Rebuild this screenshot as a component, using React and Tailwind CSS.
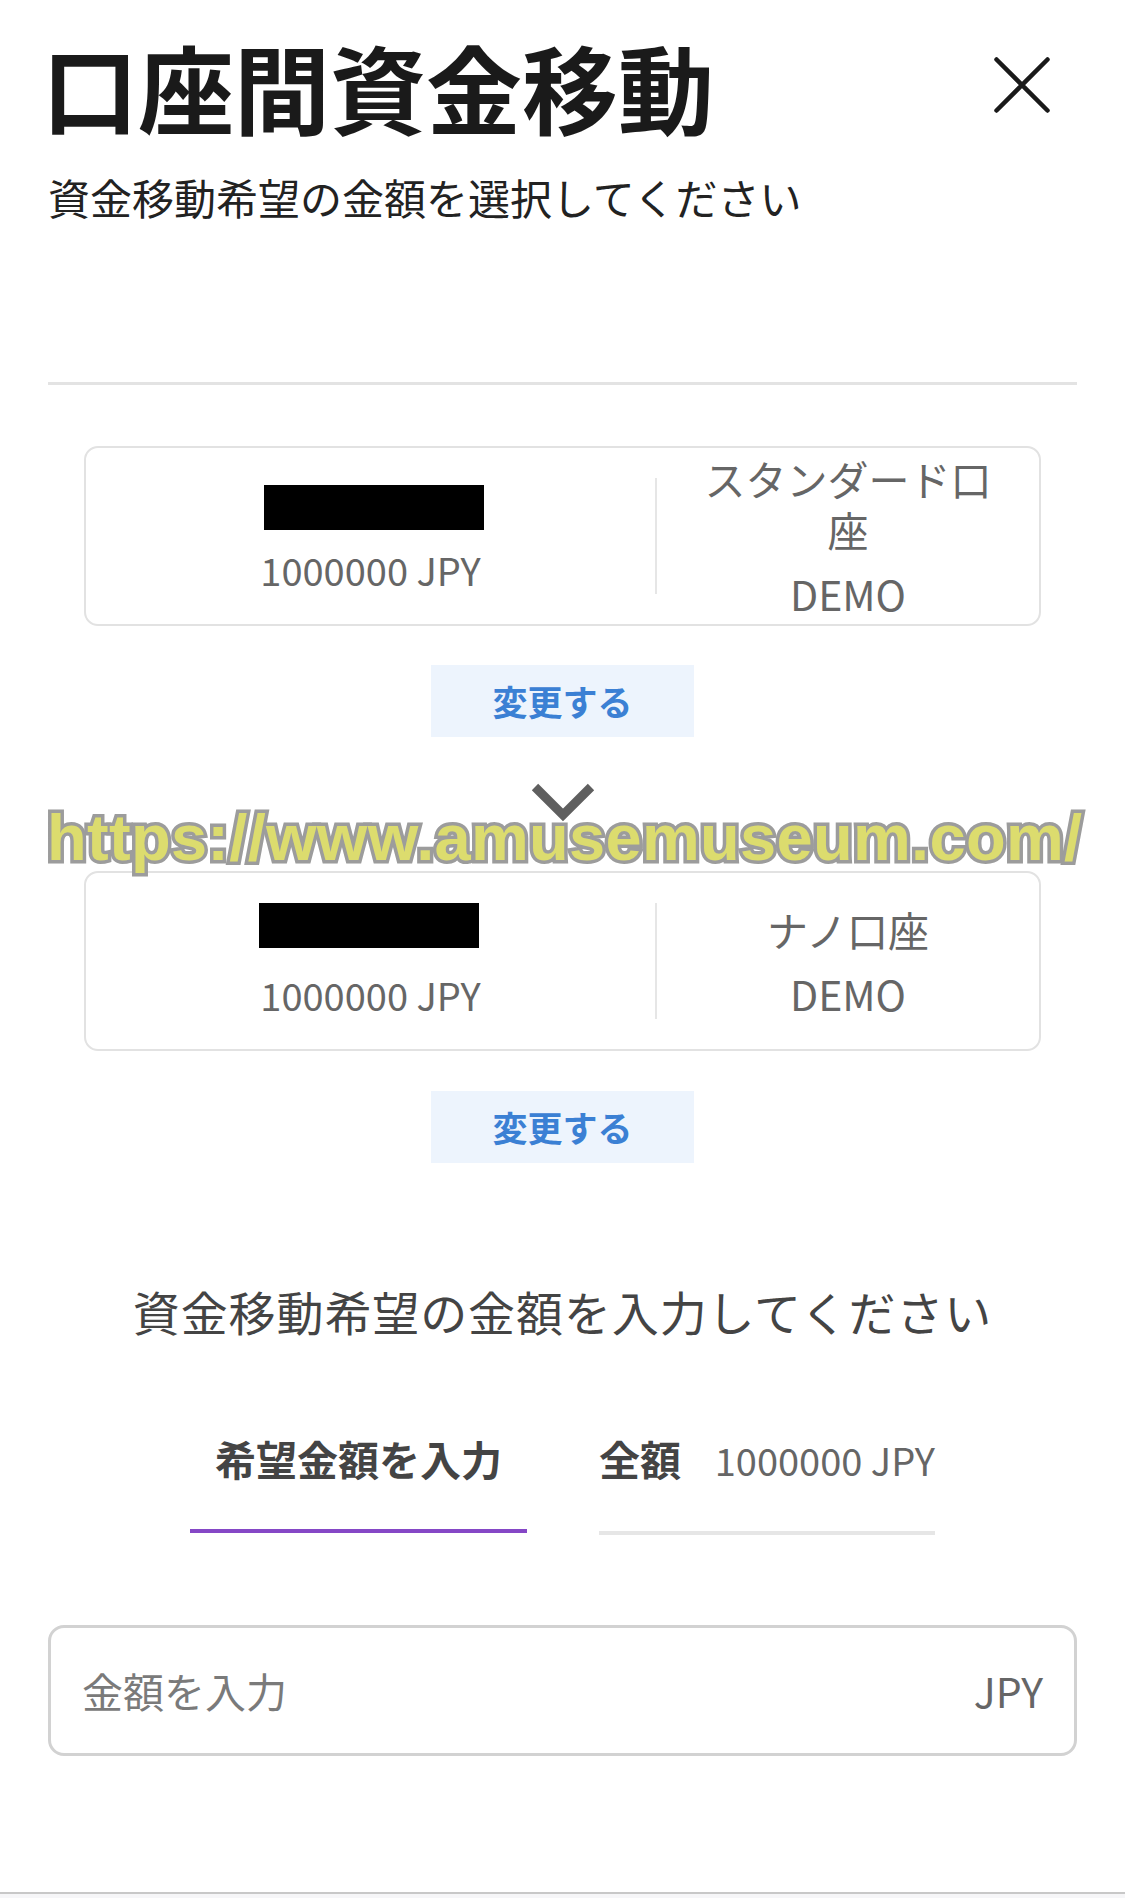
import React from 'react';

const accounts = [
  {
    id: 'from',
    name: 'スタンダード口座',
    kind: 'DEMO',
    balance: '1000000 JPY',
    maskClass: 'translate-x-[3px] translate-y-[7px]',
  },
  {
    id: 'to',
    name: 'ナノ口座',
    kind: 'DEMO',
    balance: '1000000 JPY',
    maskClass: '-translate-x-[2px]',
  },
];

const AccountCard = ({ account }) => (
  <div className="h-[180px] border-2 border-[#e2e2e2] rounded-[14px] flex items-stretch py-[30px]">
    {/* Account number (masked) + balance */}
    <div className="w-[569px] flex flex-col items-center justify-center">
      <div className={`w-[220px] h-[57px] bg-black ${account.maskClass}`} />
      <div className="mt-[22px] text-[38px] leading-[49px] text-[#666]">{account.balance}</div>
    </div>
    <div className="w-[2px] bg-[#e6e6e6]" />
    {/* Account type */}
    <div className="flex-1 flex flex-col items-center justify-center px-[38px] text-center text-[#666]">
      <div className="text-[41px] leading-[51px]">{account.name}</div>
      <div className="mt-[13px] text-[41px] leading-[51px]">{account.kind}</div>
    </div>
  </div>
);

const ChangeButton = ({ className = '' }) => (
  <button
    className={`mx-auto w-[263px] h-[72px] bg-[#edf4fd] text-[#3b80d4] text-[35px] font-bold flex items-center justify-center ${className}`}
  >
    変更する
  </button>
);

export default function App() {
  return (
    <div className="relative w-[1125px] h-[1898px] bg-white overflow-hidden flex flex-col font-['Noto_Sans_CJK_JP','Noto_Sans',sans-serif]">
      <div className="px-[48px]">
        {/* Header */}
        <div className="flex items-start justify-between pt-[38px]">
          <h1 className="-ml-[6px] text-[96px] leading-[96px] font-bold text-[#1a1a1a]">口座間資金移動</h1>
          <button className="mt-[19px] mr-[27px] w-[56px] h-[56px]">
            <svg viewBox="0 0 56 56" className="w-[56px] h-[56px]" fill="none" stroke="#1a1a1a" strokeWidth="4.5" strokeLinecap="round">
              <path d="M2.5 2.5 L53.5 53.5 M53.5 2.5 L2.5 53.5" />
            </svg>
          </button>
        </div>
        <p className="mt-[38px] text-[42px] leading-[49px] text-[#222]">資金移動希望の金額を選択してください</p>

        <div className="mt-[161px] h-[3px] bg-[#e3e3e3]" />

        {/* Accounts */}
        <div className="mx-[36px] mt-[61px] flex flex-col">
          <AccountCard account={accounts[0]} />
          <ChangeButton className="mt-[39px]" />
          <div className="mt-[45px] flex justify-center">
            <svg viewBox="0 0 66 42" className="w-[66px] h-[42px]" fill="none" stroke="#5f5f5f" strokeWidth="9" strokeLinecap="butt" strokeLinejoin="miter">
              <polyline points="5,5 33,33 61,5" />
            </svg>
          </div>
          <div className="mt-[47px]">
            <AccountCard account={accounts[1]} />
          </div>
          <ChangeButton className="mt-[40px]" />
        </div>

        {/* Amount */}
        <p className="mt-[120px] text-center text-[47px] leading-[56px] tracking-[0.9px] text-[#444]">資金移動希望の金額を入力してください</p>

        <div className="mt-[94px] flex justify-center gap-[72px]">
          <div className="w-[337px] flex flex-col items-center">
            <div className="text-[41px] leading-[50px] font-bold text-[#444]">希望金額を入力</div>
            <div className="mt-[46px] h-[4px] w-full bg-[#8547c6]" />
          </div>
          <div className="w-[336px] flex flex-col">
            <div className="flex items-baseline justify-between">
              <span className="text-[41px] leading-[50px] font-bold text-[#444]">全額</span>
              <span className="text-[38px] leading-[50px] text-[#666]">1000000 JPY</span>
            </div>
            <div className="mt-[46px] h-[4px] w-full bg-[#e6e6e6]" />
          </div>
        </div>

        <div className="mt-[90px] h-[131px] border-[3px] border-[#d2d2d2] rounded-[16px] flex items-center pl-[31px] pr-[31px]">
          <input
            type="text"
            placeholder="金額を入力"
            className="flex-1 min-w-0 bg-transparent outline-none text-[41px] text-[#333] placeholder:text-[#7a7a7a]"
          />
          <span className="text-[41px] text-[#666]">JPY</span>
        </div>
      </div>

      <div className="mt-auto h-[6px] border-t-2 border-[#c8c8c8] bg-[#f6f6f8]" />

      {/* Watermark overlay */}
      <div className="absolute top-[805px] left-[47px] pointer-events-none whitespace-nowrap font-['Liberation_Sans',sans-serif] font-bold text-[65px] leading-[65px] tracking-[0.3px] text-[#dcdc6e] [-webkit-text-stroke:7px_#9c9c9c] [paint-order:stroke_fill]">
        https://www.amusemuseum.com/
      </div>
    </div>
  );
}
